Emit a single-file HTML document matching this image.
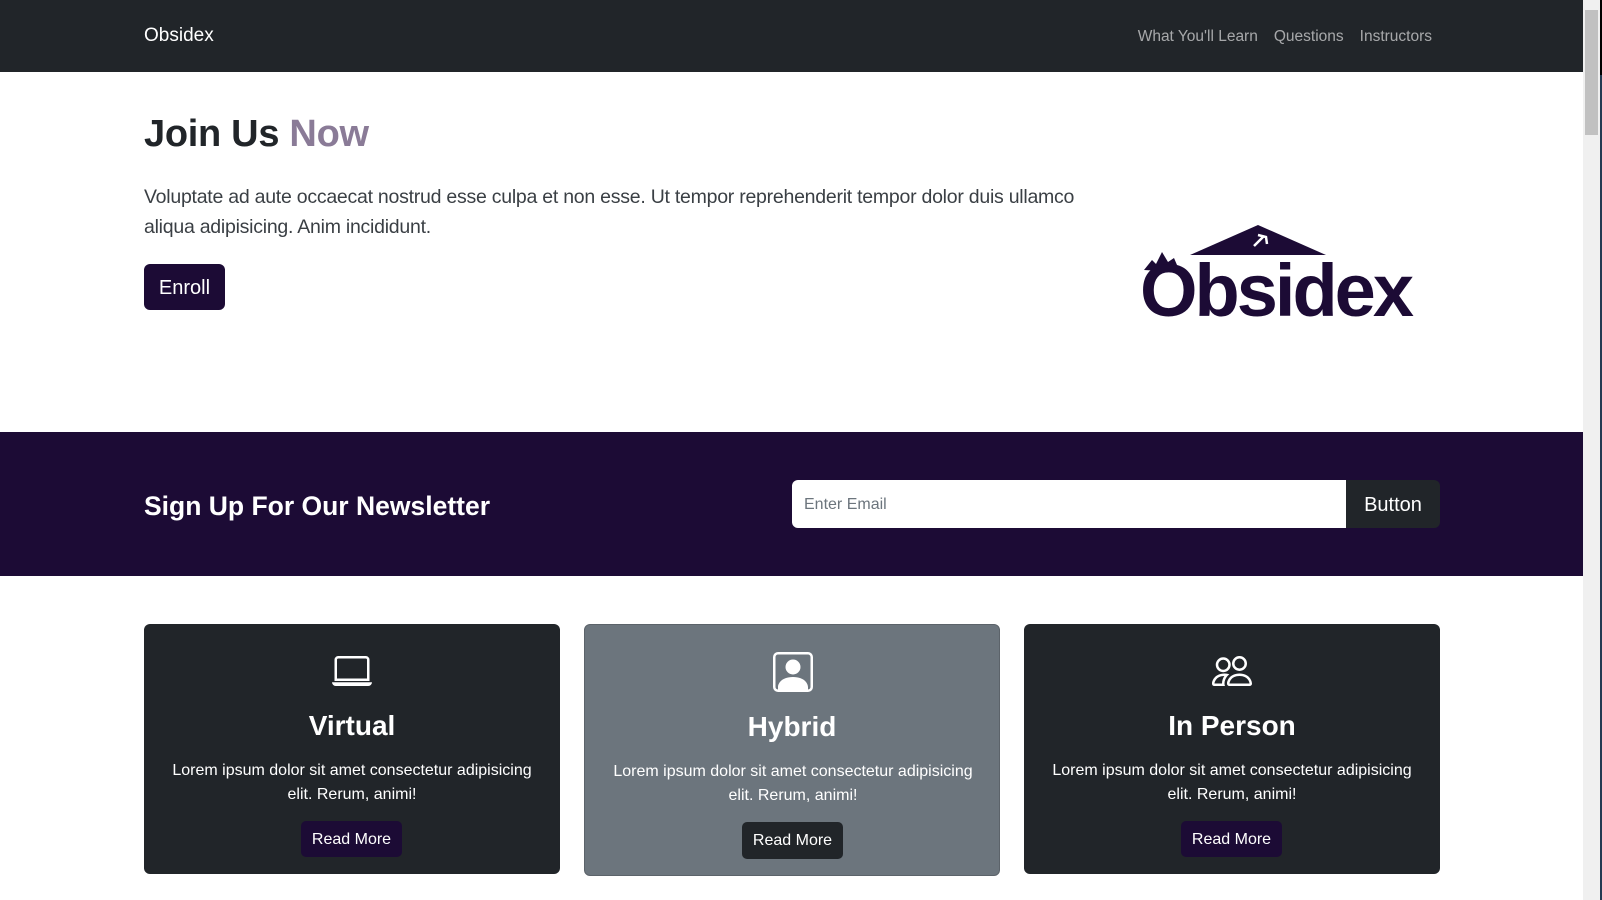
<!DOCTYPE html>
<html><head><meta charset="utf-8"><style>
*{box-sizing:border-box;margin:0;padding:0}
html,body{width:1602px;height:900px;overflow:hidden;background:#fff;font-family:"Liberation Sans",sans-serif;color:#212529}
.sb{position:absolute;left:1583px;top:0;width:17px;height:900px;background:#f0f0f0}
.sb .th{position:absolute;left:2px;top:10px;width:13px;height:125px;background:#c1c1c1}
.edge{position:absolute;left:1600px;top:0;width:2px;height:900px;background:#243a52}
.edge i{display:block;height:75px;background:#000}
nav{position:absolute;left:0;top:0;width:1583px;height:72px;background:#212529}
.brand{position:absolute;left:144px;top:25px;color:#fff;font-size:19px}
.links{position:absolute;right:151px;top:28px;font-size:15.5px;color:rgba(255,255,255,.6)}
.links span{margin-left:16px}
h1{position:absolute;left:144px;top:113px;font-size:38px;font-weight:bold;color:#212529;letter-spacing:-0.3px}
h1 span{color:#8a7b97}
.lead{position:absolute;left:144px;top:182px;width:960px;font-size:19.5px;line-height:30px;font-weight:300;color:#3a3f44;letter-spacing:-0.25px}
.enroll{position:absolute;left:144px;top:264px;width:81px;height:46px;background:#1c0b35;border-radius:6px;color:#fff;font-size:20px;text-align:center;line-height:48px}
.news{position:absolute;left:0;top:432px;width:1583px;height:144px;background:#1c0b35}
.news h2{position:absolute;left:144px;top:59px;font-size:26.5px;color:#fff;font-weight:bold}
.inp{position:absolute;left:792px;top:48px;width:554px;height:48px;background:#fff;border-radius:6px 0 0 6px;font-size:16px;color:#6c757d;padding:16px 12px}
.btn{position:absolute;left:1346px;top:48px;width:94px;height:48px;background:#212529;border-radius:0 6px 6px 0;color:#fff;font-size:20px;text-align:center;line-height:50px}
.card{position:absolute;top:624px;width:416px;height:250px;background:#212529;border-radius:6px;color:#fff;text-align:center}
.card.g{background:#6c757d;height:252px;border:1px solid #5c636a}
.card svg{position:absolute;left:188px;top:27px}
.card h3{position:absolute;left:0;width:100%;top:86px;font-size:28px;font-weight:bold}
.card p{position:absolute;left:20px;width:376px;top:135px;font-size:16px;line-height:24px}
.card .rm{position:absolute;top:197px;left:157px;width:101px;height:36px;background:#1c0b35;border-radius:5px;line-height:38px;font-size:16px}
.card.g .rm{background:#212529;top:197px;height:37px}
</style></head><body>
<nav><div class="brand">Obsidex</div><div class="links"><span>What You'll Learn</span><span>Questions</span><span>Instructors</span></div></nav>
<h1>Join Us <span>Now</span></h1>
<div class="lead">Voluptate ad aute occaecat nostrud esse culpa et non esse. Ut tempor reprehenderit tempor dolor duis ullamco aliqua adipisicing. Anim incididunt.</div>
<div class="enroll">Enroll</div>
<svg style="position:absolute;left:1140px;top:222px" width="280" height="100" viewBox="0 0 280 100">
<polygon points="50,33 118,3 186,33" fill="#1c0b35"/>
<path d="M114 24 L124 14 M118 13 L126 15 L127 22" stroke="#fff" stroke-width="2.5" fill="none"/>
<path d="M4 48 L12 38 L16 42 L22 30 L28 40 L34 36 L40 50 Z" fill="#1c0b35"/>
<text x="0" y="94" font-family="Liberation Sans,sans-serif" font-weight="bold" font-size="74" fill="#1c0b35" letter-spacing="-3">Obsidex</text>
</svg>
<div class="news"><h2>Sign Up For Our Newsletter</h2><div class="inp">Enter Email</div><div class="btn">Button</div></div>
<div class="card" style="left:144px">
<svg width="40" height="40" viewBox="0 0 16 16" fill="#fff"><path d="M13.5 3a.5.5 0 0 1 .5.5V11H2V3.5a.5.5 0 0 1 .5-.5h11zm-11-1A1.5 1.5 0 0 0 1 3.5V12h14V3.5A1.5 1.5 0 0 0 13.5 2h-11zM0 12.5h16a1.5 1.5 0 0 1-1.5 1.5h-13A1.5 1.5 0 0 1 0 12.5z"/></svg>
<h3>Virtual</h3><p>Lorem ipsum dolor sit amet consectetur adipisicing elit. Rerum, animi!</p><div class="rm">Read More</div></div>
<div class="card g" style="left:584px">
<svg width="40" height="40" viewBox="0 0 16 16" fill="#fff"><path d="M11 6a3 3 0 1 1-6 0 3 3 0 0 1 6 0z"/><path d="M2 0a2 2 0 0 0-2 2v12a2 2 0 0 0 2 2h12a2 2 0 0 0 2-2V2a2 2 0 0 0-2-2H2zm12 1a1 1 0 0 1 1 1v12a1 1 0 0 1-1 1v-1c0-1-1-4-6-4s-6 3-6 4v1a1 1 0 0 1-1-1V2a1 1 0 0 1 1-1h12z"/></svg>
<h3>Hybrid</h3><p>Lorem ipsum dolor sit amet consectetur adipisicing elit. Rerum, animi!</p><div class="rm">Read More</div></div>
<div class="card" style="left:1024px">
<svg width="40" height="40" viewBox="0 0 16 16" fill="#fff"><path d="M15 14s1 0 1-1-1-4-5-4-5 3-5 4 1 1 1 1h8zm-7.978-1A.261.261 0 0 1 7 12.996c.001-.264.167-1.030.76-1.720C8.312 10.629 9.282 10 11 10c1.717 0 2.687.63 3.240 1.276.593.69.758 1.457.76 1.720l-.008.002a.274.274 0 0 1-.014.002H7.022zM11 7a2 2 0 1 0 0-4 2 2 0 0 0 0 4zm3-2a3 3 0 1 1-6 0 3 3 0 0 1 6 0zM6.936 9.28a5.88 5.88 0 0 0-1.23-.247A7.35 7.35 0 0 0 5 9c-4 0-5 3-5 4 0 .667.333 1 1 1h4.216A2.238 2.238 0 0 1 5 13c0-1.010.377-2.042 1.090-2.904.243-.294.526-.569.846-.816zM4.920 10A5.493 5.493 0 0 0 4 13H1c0-.26.164-1.030.76-1.724.545-.636 1.492-1.256 3.160-1.275zM1.500 5.500a3 3 0 1 1 6 0 3 3 0 0 1-6 0zm3-2a2 2 0 1 0 0 4 2 2 0 0 0 0-4z"/></svg>
<h3>In Person</h3><p>Lorem ipsum dolor sit amet consectetur adipisicing elit. Rerum, animi!</p><div class="rm">Read More</div></div>
<div class="sb"><div class="th"></div></div><div class="edge"><i></i></div>
</body></html>
